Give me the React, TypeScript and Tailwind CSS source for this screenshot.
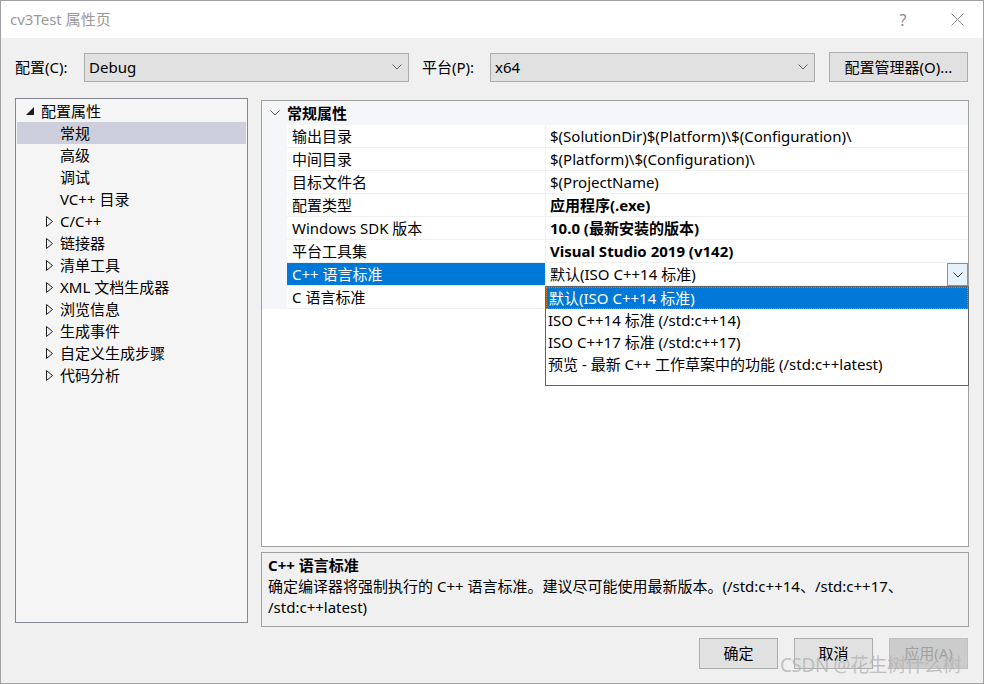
import React from "react";

const font = { fontFamily: '"Noto Sans", "Noto Sans CJK SC", sans-serif' };

const Chevron = ({ className = "" }: { className?: string }) => (
  <svg width="10" height="6" viewBox="0 0 10 6" className={className}>
    <path d="M0.5 0.5 L5 5 L9.5 0.5" fill="none" stroke="currentColor" strokeWidth="1" />
  </svg>
);

const treeItems = [
  { label: "常规", level: 1, selected: true },
  { label: "高级", level: 1 },
  { label: "调试", level: 1 },
  { label: "VC++ 目录", level: 1 },
  { label: "C/C++", level: 0, arrow: true },
  { label: "链接器", level: 0, arrow: true },
  { label: "清单工具", level: 0, arrow: true },
  { label: "XML 文档生成器", level: 0, arrow: true },
  { label: "浏览信息", level: 0, arrow: true },
  { label: "生成事件", level: 0, arrow: true },
  { label: "自定义生成步骤", level: 0, arrow: true },
  { label: "代码分析", level: 0, arrow: true },
];

const props = [
  { name: "输出目录", value: "$(SolutionDir)$(Platform)\\$(Configuration)\\" },
  { name: "中间目录", value: "$(Platform)\\$(Configuration)\\" },
  { name: "目标文件名", value: "$(ProjectName)" },
  { name: "配置类型", value: "应用程序(.exe)", bold: true },
  { name: "Windows SDK 版本", value: "10.0 (最新安装的版本)", bold: true },
  { name: "平台工具集", value: "Visual Studio 2019 (v142)", bold: true },
  { name: "C++ 语言标准", value: "默认(ISO C++14 标准)", selected: true },
  { name: "C 语言标准", value: "" },
];

const options = [
  "默认(ISO C++14 标准)",
  "ISO C++14 标准 (/std:c++14)",
  "ISO C++17 标准 (/std:c++17)",
  "预览 - 最新 C++ 工作草案中的功能 (/std:c++latest)",
];

const Combo = ({ value, width }: { value: string; width: string }) => (
  <div
    className={`${width} h-[29px] bg-[#e1e1e1] border border-[#adadad] flex items-center justify-between pl-[4px] pr-[6px] text-[15px] text-black`}
  >
    <span>{value}</span>
    <Chevron className="text-[#606060]" />
  </div>
);

const App = () => {
  return (
    <div
      style={font}
      className="w-[984px] h-[684px] border border-[#a0a0a0] bg-[#f0f0f0] flex flex-col overflow-hidden relative"
    >
      {/* Title bar */}
      <div className="h-[37px] bg-white flex items-center justify-between shrink-0">
        <span className="pl-[9px] text-[15px] text-[#999999]">cv3Test 属性页</span>
        <div className="flex items-center text-[#8a8a8a]">
          <span className="text-[16px] w-[20px] text-center mr-[38px]">?</span>
          <svg width="13" height="13" viewBox="0 0 13 13" className="mr-[19px]">
            <path d="M0.5 0.5 L12.5 12.5 M12.5 0.5 L0.5 12.5" stroke="#8a8a8a" strokeWidth="1" />
          </svg>
        </div>
      </div>

      {/* Config row */}
      <div className="flex items-center mt-[14px] pl-[14px] h-[30px] text-[15px] text-black">
        <span className="w-[69px]">配置(C):</span>
        <Combo value="Debug" width="w-[325px]" />
        <span className="ml-[13px] w-[68px]">平台(P):</span>
        <Combo value="x64" width="w-[325px]" />
        <div className="ml-[14px] w-[139px] h-[30px] bg-[#e1e1e1] border border-[#adadad] flex items-center justify-center">
          配置管理器(O)...
        </div>
      </div>

      {/* Main area */}
      <div className="flex mt-[16px] pl-[14px] text-[15px]">
        {/* Tree */}
        <div className="w-[233px] h-[525px] border border-[#828790] bg-[#f5f5f5] pt-[1px] px-[1px]">
          <div className="h-[22px] flex items-center">
            <svg width="8" height="8" viewBox="0 0 8 8" className="ml-[9px] mr-[7px]">
              <path d="M8 0 L8 8 L0 8 Z" fill="#1e1e1e" />
            </svg>
            <span>配置属性</span>
          </div>
          {treeItems.map((t) => (
            <div
              key={t.label}
              className={`h-[22px] flex items-center ${t.selected ? "bg-[#cdd0dc]" : ""}`}
            >
              {t.arrow ? (
                <svg width="7" height="11" viewBox="0 0 7 11" className="ml-[29px] mr-[7px]">
                  <path d="M0.5 0.5 L6.5 5.5 L0.5 10.5 Z" fill="none" stroke="#1e1e1e" strokeWidth="1" />
                </svg>
              ) : (
                <span className="w-[43px]" />
              )}
              <span>{t.label}</span>
            </div>
          ))}
        </div>

        {/* Right column */}
        <div className="ml-[13px] flex flex-col">
          <div className="w-[708px] h-[447px] border border-[#a0a0a0] bg-white mt-[2px] relative">
            {/* header */}
            <div className="h-[24px] bg-[#f4f6f9] flex items-center">
              <span className="w-[25px] flex justify-center text-[#555]">
                <Chevron />
              </span>
              <span className="font-bold">常规属性</span>
            </div>
            {props.map((p) => (
              <div key={p.name} className="flex h-[23px]">
                <div className="w-[25px] bg-[#f4f6f9] shrink-0" />
                <div
                  className={`w-[259px] shrink-0 flex items-center pl-[5px] border-b border-r border-[#f0f0f0] ${
                    p.selected ? "bg-[#0078d7] text-white border-[#0078d7]" : "text-black"
                  }`}
                >
                  {p.name}
                </div>
                <div
                  className={`flex-1 flex items-center pl-[4px] border-b border-[#f0f0f0] ${
                    p.bold ? "font-bold" : ""
                  } relative`}
                >
                  {p.value}
                  {p.selected && (
                    <div className="absolute right-0 top-0 w-[21px] h-[23px] border border-[#569de5] bg-[#e5f1fb] flex items-center justify-center text-[#333]">
                      <Chevron />
                    </div>
                  )}
                </div>
              </div>
            ))}

            {/* dropdown list */}
            <div className="absolute left-[283px] top-[185px] w-[424px] h-[100px] bg-white border border-[#646464] z-10">
              {options.map((o, i) => (
                <div
                  key={o}
                  className={`h-[22px] flex items-center pl-[2px] ${
                    i === 0 ? "bg-[#0078d7] text-white border border-dotted border-[#d08020]" : ""
                  }`}
                >
                  {o}
                </div>
              ))}
            </div>
          </div>

          {/* Description */}
          <div className="w-[708px] h-[75px] mt-[5px] border border-[#a0a0a0] bg-[#f0f0f0] px-[6px] pt-[2px] leading-[21px]">
            <div className="font-bold">C++ 语言标准</div>
            <div>
              确定编译器将强制执行的 C++ 语言标准。建议尽可能使用最新版本。(/std:c++14、/std:c++17、
              <br />
              /std:c++latest)
            </div>
          </div>
        </div>
      </div>

      {/* Buttons */}
      <div className="flex justify-end gap-[16px] pr-[15px] mt-[11px] text-[15px]">
        <div className="w-[79px] h-[31px] bg-[#e1e1e1] border border-[#adadad] flex items-center justify-center">
          确定
        </div>
        <div className="w-[79px] h-[31px] bg-[#e1e1e1] border border-[#adadad] flex items-center justify-center">
          取消
        </div>
        <div className="w-[79px] h-[31px] bg-[#cccccc] border border-[#bfbfbf] flex items-center justify-center text-[#a0a0a0]">
          应用(A)
        </div>
      </div>

      {/* watermark */}
      <div className="absolute left-[779px] top-[650px] text-[19px] text-[#b4b4b4]/80 tracking-tight">
        CSDN @花生树什么树
      </div>
    </div>
  );
};

export default App;
